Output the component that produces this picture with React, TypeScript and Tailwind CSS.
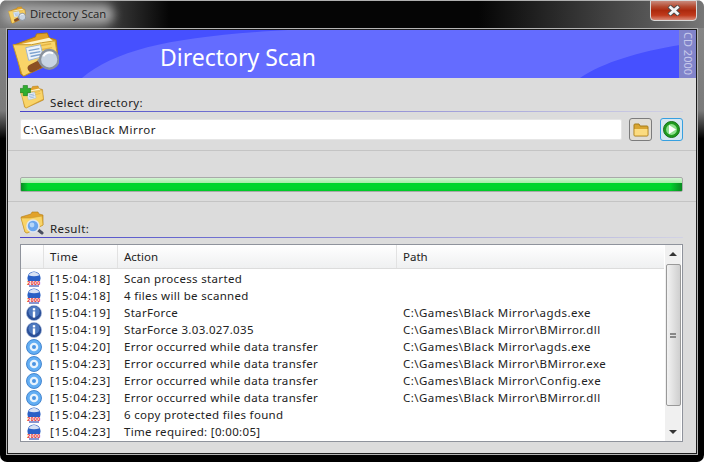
const rows = [
  ["disk", "[15:04:18]", "Scan process started", ""],
  ["disk", "[15:04:18]", "4 files will be scanned", ""],
  ["info", "[15:04:19]", "StarForce", "C:\\Games\\Black Mirror\\agds.exe"],
  ["info", "[15:04:19]", "StarForce 3.03.027.035", "C:\\Games\\Black Mirror\\BMirror.dll"],
  ["cd", "[15:04:20]", "Error occurred while data transfer", "C:\\Games\\Black Mirror\\agds.exe"],
  ["cd", "[15:04:23]", "Error occurred while data transfer", "C:\\Games\\Black Mirror\\BMirror.exe"],
  ["cd", "[15:04:23]", "Error occurred while data transfer", "C:\\Games\\Black Mirror\\Config.exe"],
  ["cd", "[15:04:23]", "Error occurred while data transfer", "C:\\Games\\Black Mirror\\BMirror.dll"],
  ["disk", "[15:04:23]", "6 copy protected files found", ""],
  ["disk", "[15:04:23]", "Time required: [0:00:05]", ""],
];

function Folder({ size, lens, plus, doc }: { size: number; lens?: boolean; plus?: boolean; doc?: boolean }) {
  return (
    <svg width={size} height={size} viewBox="0 0 48 48">
      <path d="M3 14 L24 6 L25 3 L36 2 L38 7 L45 9 L47 30 L12 46 L9 44Z" fill="#e2a22a" stroke="#b07c14" strokeWidth="1" />
      <path d="M6 14 L38 7 L44 12 L46 28 L14 42Z" fill="#fff4c8" />
      <path d="M1 14 L20 14 L30 12 L44 10 L47 28 L12 46 L10 44Z" fill="#f9d468" stroke="#c8982a" strokeWidth="1" />
      <path d="M18 17 L40 13 M20 21 L41 17" stroke="#e6b545" strokeWidth="1.5" />
      {doc && (
        <g>
          <path d="M14 17 L29 14 L32 26 L17 30Z" fill="#eef4fb" stroke="#9db4d0" />
          <path d="M17 20 L28 18 M18 23 L29 21 M19 26 L29 24" stroke="#7da2cf" strokeWidth="1.4" />
        </g>
      )}
      {lens && (
        <g>
          <path d="M32 32 L20 38" stroke="#8c4f22" strokeWidth="8" strokeLinecap="round" />
          <path d="M33 29 L28 33" stroke="#9a9a9a" strokeWidth="8" />
          <circle cx="38" cy="29" r="9.5" fill="#c8d4e2" stroke="#8a929c" strokeWidth="2.5" />
          <path d="M32 26 A7 7 0 0 1 42 23" stroke="#fff" strokeWidth="2" fill="none" />
        </g>
      )}
      {plus && (
        <path d="M4 1 H14 V8 H21 V18 H14 V25 H4 V18 H-3 V8 H4Z" transform="translate(3 0) scale(0.85)" fill="#2fae2f" stroke="#1c7c1c" strokeWidth="1.5" />
      )}
    </svg>
  );
}

function ResultFolder() {
  return (
    <svg width="24" height="24" viewBox="0 0 24 24">
      <path d="M1 6 L11 3 L12 1 L18 1 L19 3 L23 4 L23 14 L7 22 L5 21Z" fill="#e2a22a" stroke="#b07c14" strokeWidth="0.6" />
      <path d="M1 7 L10 7 L22 5 L23 14 L7 22 L5 21Z" fill="#f9d468" stroke="#c8982a" strokeWidth="0.6" />
      <path d="M17 18 L22 22" stroke="#4a4f60" strokeWidth="3" strokeLinecap="round" />
      <circle cx="13" cy="15" r="6" fill="#6aa6ee" stroke="#dfe6ef" strokeWidth="1.6" />
      <circle cx="12" cy="14" r="2.4" fill="#b6d6f8" />
    </svg>
  );
}

function StatusIcon({ kind }: { kind: string }) {
  if (kind === "info") {
    return (
      <svg width="16" height="16" viewBox="0 0 16 16">
        <circle cx="8" cy="8" r="7.6" fill="#2a4f98" stroke="#a9bbdb" strokeWidth="0.6" />
        <circle cx="8" cy="6.5" r="5.6" fill="#4f7ac0" />
        <rect x="6.8" y="6.4" width="2.4" height="6.2" fill="#fff" />
        <rect x="6.8" y="3.2" width="2.4" height="2.2" fill="#fff" />
      </svg>
    );
  }
  if (kind === "cd") {
    return (
      <svg width="16" height="16" viewBox="0 0 16 16">
        <circle cx="8" cy="8" r="7.5" fill="#62aef4" stroke="#2f74c4" strokeWidth="0.8" />
        <circle cx="8" cy="8" r="4.3" fill="#e8f3fd" />
        <circle cx="8" cy="8" r="2" fill="#4a94e2" />
      </svg>
    );
  }
  return (
    <svg width="16" height="16" viewBox="0 0 16 16">
      <circle cx="8" cy="7" r="6.6" fill="#2a60c6" />
      <path d="M2.4 4.2 A6.6 6.6 0 0 1 13.6 4.2 Q8 6.4 2.4 4.2Z" fill="#d8e2f4" />
      <rect x="1.4" y="10" width="13.2" height="4.6" fill="#fff" />
      <text x="8" y="14" textAnchor="middle" fontSize="5.4" fontWeight="700" fill="#e01010" fontFamily="Liberation Sans, sans-serif">2000</text>
      <rect x="3" y="14.4" width="10" height="1.2" fill="#3a50b0" />
    </svg>
  );
}

function SectionLabel({ icon, text, className }: { icon: React.ReactNode; text: string; className: string }) {
  return (
    <div className={className}>
      <div className="flex items-end h-[26px]">
        <div className="w-[30px] h-[26px] shrink-0">{icon}</div>
        <span className="text-[11.5px] leading-[14px] tracking-[0.4px] text-[#222] pb-[1px]">{text}</span>
      </div>
      <div className="h-px bg-gradient-to-r from-[#4a44c8] via-[#8f8cd4] to-[#d2d2e4]" />
    </div>
  );
}

export default function App() {
  return (
    <div
      className="w-[704px] h-[462px] overflow-hidden rounded-[7px] flex flex-col px-[6px] pb-[7px] bg-[linear-gradient(to_bottom,#8a8a8a_0%,#7a7a7a_24%,#000_30%,#000_100%)]"
      style={{ fontFamily: '"Noto Sans", sans-serif' }}
    >
      {/* title bar */}
      <div className="relative h-[28px] shrink-0 flex items-center -mx-[6px] px-[8px] bg-[linear-gradient(to_right,#767676_0%,#3a3a3a_16%,#050505_24%,#050505_68%,#555_92%,#777_100%)] border-t border-t-[#b0b0b0]">
        <div className="absolute left-[2px] top-[3px] w-[112px] h-[21px] rounded-[10px] bg-[#a4a4a4] blur-[5px]" />
        <div className="relative w-[18px] h-[18px] mr-[4px]">
          <Folder size={18} lens doc />
        </div>
        <span className="relative text-[11.3px] text-[#222]" style={{ fontFamily: '"Open Sans", sans-serif' }}>
          Directory Scan
        </span>
        <div className="absolute right-[7px] -top-px w-[47px] h-[21px] rounded-b-[4px] border border-[#d8d8d8] bg-[linear-gradient(to_bottom,#c98a7c_0%,#b5492f_30%,#ad2a0e_50%,#c03a1c_75%,#d98a78_100%)] flex items-center justify-center">
          <svg width="14" height="11" viewBox="0 0 14 11">
            <path d="M2 1 L12 10 M12 1 L2 10" stroke="#4a4a4a" strokeWidth="4.6" />
            <path d="M2.5 1.5 L11.5 9.5 M11.5 1.5 L2.5 9.5" stroke="#f4f4f4" strokeWidth="3" />
          </svg>
        </div>
      </div>

      {/* window body */}
      <div className="flex-1 border border-[#b4b4b4]">
        <div className="h-full flex flex-col border border-[#1c1c1c] bg-[#dcdcdc]">
          {/* header */}
          <div className="relative h-[48px] shrink-0 flex overflow-hidden bg-[#4650ff]">
            <svg className="absolute inset-0" width="688" height="48" viewBox="0 0 688 48">
              <path d="M74 48 C110 18 170 6 280 0 L688 0 L672 15 C630 22 596 32 572 48Z" fill="#646cff" />
            </svg>
            <div className="relative w-[152px] pl-[4px] pt-[1px]">
              <Folder size={47} lens doc />
            </div>
            <div className="relative flex-1 text-white text-[23px] leading-[55px]">Directory Scan</div>
            <div className="relative w-[17px] bg-[#8184ca] flex items-center justify-center">
              <span className="text-[11px] text-[#c6c8ea] whitespace-nowrap [writing-mode:vertical-rl]">CD 2000</span>
            </div>
          </div>

          {/* select directory */}
          <div className="pl-[12px] pr-[13px] h-[73px] shrink-0 border-b border-b-[#c4c4c4]">
            <SectionLabel text="Select directory:" className="mt-[7px]" icon={<Folder size={24} plus doc />} />
            <div className="flex items-center mt-[6px]">
              <div className="w-[602px] h-[21px] bg-white rounded-[2px] border border-[#e6e6e6] flex items-center px-[2px] text-[11.5px] tracking-[0.5px] text-[#222]">
                C:\Games\Black Mirror
              </div>
              <div className="ml-[7px] w-[23px] h-[23px] rounded-[3px] border border-[#7c7c7c] bg-[#e0ddd6] flex items-center justify-center">
                <svg width="16" height="14" viewBox="0 0 16 14">
                  <path d="M1 2 Q1 1 2 1 L6 1 L7 3 L14 3 Q15 3 15 4 L15 12 Q15 13 14 13 L2 13 Q1 13 1 12Z" fill="#d9a530" stroke="#a67c18" />
                  <path d="M1.5 6 L14.5 6 L14.5 12.5 L1.5 12.5Z" fill="#fbdc80" />
                </svg>
              </div>
              <div className="ml-[8px] w-[23px] h-[23px] rounded-[3px] border border-[#37a0e0] bg-[#d6e6f0] flex items-center justify-center">
                <svg width="17" height="17" viewBox="0 0 17 17">
                  <circle cx="8.5" cy="8.5" r="8" fill="#1f9b1f" stroke="#176f17" />
                  <circle cx="8.5" cy="8.5" r="5.4" fill="#8fe08f" />
                  <path d="M6 4 L13 8.5 L6 13Z" fill="#fff" />
                </svg>
              </div>
            </div>
          </div>

          {/* progress */}
          <div className="pl-[12px] pr-[13px] h-[51px] shrink-0 border-b border-b-[#c4c4c4] pt-[26px]">
            <div className="relative h-[15px] rounded-[2px] border border-[#a9a9a9] overflow-hidden bg-[linear-gradient(to_bottom,#d2f5d2_0%,#a8eca8_38%,#00d52c_42%,#00d52c_80%,#00c828_100%)]">
              <div className="absolute left-0 bottom-0 w-[7px] h-[8px] bg-gradient-to-r from-[#0a8a22] to-transparent" />
              <div className="absolute right-0 bottom-0 w-[12px] h-[8px] bg-gradient-to-l from-[#0a8a22] to-transparent" />
            </div>
          </div>

          {/* result */}
          <div className="pl-[12px] pr-[13px] flex-1 flex flex-col min-h-0">
            <SectionLabel text="Result:" className="mt-[9px]" icon={<ResultFolder />} />
            <div className="mt-[6px] h-[198px] border border-[#8f939c] bg-white flex overflow-hidden">
              <div className="flex-1 min-w-0 mr-[1px]">
                <div className="flex h-[24px] mb-[1px] text-[11.5px] text-[#222] bg-gradient-to-b from-[#ffffff] to-[#eff0f1] border-b border-b-[#dcdcdc]">
                  <div className="w-[23px] border-r border-r-[#e2e2e2]" />
                  <div className="w-[74px] pl-[6px] leading-[24px] tracking-[0.4px] border-r border-r-[#e2e2e2]">Time</div>
                  <div className="w-[279px] pl-[6px] leading-[24px] border-r border-r-[#e2e2e2]">Action</div>
                  <div className="flex-1 pl-[6px] leading-[24px]">Path</div>
                </div>
                {rows.map((r, i) => (
                  <div key={i} className="flex h-[17px] items-center text-[11.5px] tracking-[0.33px] text-[#222] whitespace-nowrap">
                    <div className="w-[23px] pl-[5px] h-[16px]"><StatusIcon kind={r[0]} /></div>
                    <div className="w-[74px] pl-[6px] tracking-[0.8px]">{r[1]}</div>
                    <div className="w-[279px] pl-[6px]">{r[2]}</div>
                    <div className="pl-[6px] tracking-[0.45px]">{r[3]}</div>
                  </div>
                ))}
              </div>
              <div className="w-[16px] mr-[1px] shrink-0 bg-[#f0f0f0] flex flex-col items-center pt-[7px] pb-[7px]">
                <div className="w-0 h-0 border-x-[4px] border-x-transparent border-b-[4px] border-b-[#333]" />
                <div className="mt-[8px] w-[15px] h-[142px] border border-[#999] rounded-[2px] bg-gradient-to-r from-[#f2f2f2] to-[#cfcfcf] flex items-center justify-center">
                  <div className="w-[6px] h-[5px] border-y-2 border-y-[#888]" />
                </div>
                <div className="flex-1" />
                <div className="w-0 h-0 border-x-[4px] border-x-transparent border-t-[4px] border-t-[#333]" />
              </div>
            </div>
          </div>
        </div>
      </div>
    </div>
  );
}
